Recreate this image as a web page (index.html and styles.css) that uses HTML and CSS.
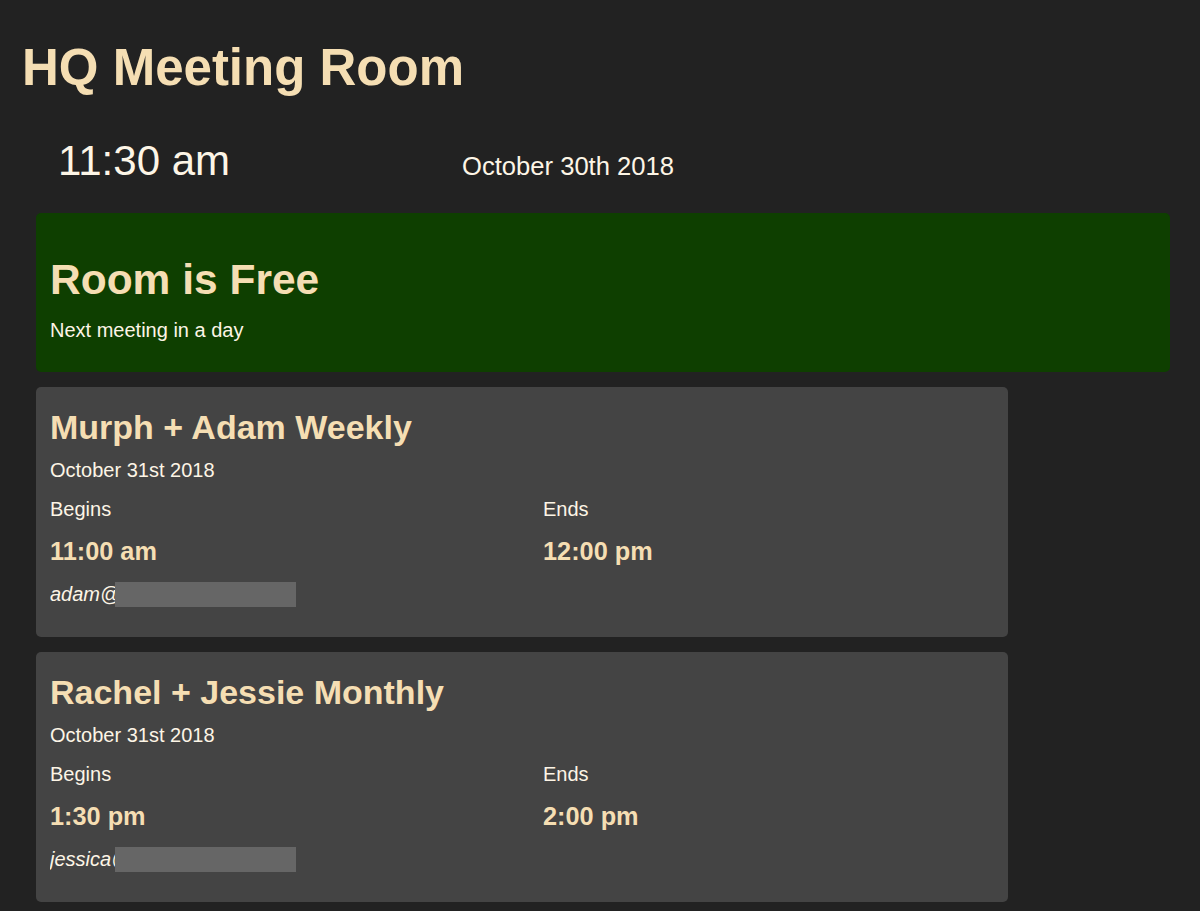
FILE: index.html
```html
<!DOCTYPE html>
<html lang="en">

<head>
    <meta charset="UTF-8">
    <meta name="viewport" content="width=device-width, initial-scale=1.0">
    <title>HQ Meeting Room</title>
    <link rel="stylesheet" href="styles.css">
</head>

<body>
    <div class="page">
        <h1>HQ Meeting Room</h1>
        <div class="content">
            <div class="clock">
                <span class="time">11:30 am</span>
                <span class="date">October 30th 2018</span>
            </div>

            <div class="status free">
                <h2>Room is Free</h2>
                <p>Next meeting in a day</p>
            </div>

            <div class="meeting">
                <h3>Murph + Adam Weekly</h3>
                <p class="day">October 31st 2018</p>
                <div class="times">
                    <div>
                        <p class="label">Begins</p>
                        <p class="hour">11:00 am</p>
                    </div>
                    <div>
                        <p class="label">Ends</p>
                        <p class="hour">12:00 pm</p>
                    </div>
                </div>
                <p class="email">adam@example.com<span class="redacted"></span></p>
            </div>

            <div class="meeting">
                <h3>Rachel + Jessie Monthly</h3>
                <p class="day">October 31st 2018</p>
                <div class="times">
                    <div>
                        <p class="label">Begins</p>
                        <p class="hour">1:30 pm</p>
                    </div>
                    <div>
                        <p class="label">Ends</p>
                        <p class="hour">2:00 pm</p>
                    </div>
                </div>
                <p class="email">jessica@example.com<span class="redacted"></span></p>
            </div>
        </div>
    </div>
</body>

</html>
```

FILE: styles.css
```css
body {
    margin: 0;
    font-family: "Liberation Sans", Arial, sans-serif;
    background-color: #222222;
    color: #fdf5e6;
}

p {
    margin: 0;
}

.page {
    padding: 0 30px 40px 22px;
}

h1 {
    margin: 0;
    padding-top: 38px;
    font-size: 51px;
    line-height: 59px;
    color: #f5deb3;
}

.content {
    margin-left: 14px;
}

.clock {
    display: grid;
    grid-template-columns: 404px 1fr;
    align-items: baseline;
    padding: 40px 0 0 22px;
}

.time {
    font-size: 42px;
    line-height: 48px;
}

.date {
    font-size: 25.6px;
}

.status {
    margin-top: 28px;
    padding: 43px 14px 30px;
    border-radius: 5px;
}

.free {
    background-color: #0e3f00;
}

.status h2 {
    margin: 0 0 15px;
    font-size: 42.5px;
    line-height: 48px;
    color: #f5deb3;
}

.status p {
    font-size: 20px;
    line-height: 23px;
}

.meeting {
    max-width: 944px;
    margin-top: 15px;
    padding: 21px 14px 30px;
    background-color: #444444;
    border-radius: 5px;
}

.meeting h3 {
    margin: 0 0 12px;
    font-size: 34px;
    line-height: 39px;
    color: #f5deb3;
}

.meeting p {
    font-size: 20px;
    line-height: 23px;
}

.times {
    display: grid;
    grid-template-columns: 493px 1fr;
    margin-top: 16px;
}

.meeting .hour {
    margin-top: 16px;
    font-size: 25.3px;
    line-height: 29px;
    font-weight: bold;
    color: #f5deb3;
}

.meeting .email {
    position: relative;
    margin-top: 16px;
    font-style: italic;
    line-height: 25px;
    overflow: hidden;
    white-space: nowrap;
}

.redacted {
    position: absolute;
    top: 0;
    left: 65px;
    width: 181px;
    height: 25px;
    background-color: #666666;
}

.email::after {
    content: "";
    position: absolute;
    top: 0;
    left: 246px;
    right: 0;
    height: 25px;
    background-color: #444444;
}
```
